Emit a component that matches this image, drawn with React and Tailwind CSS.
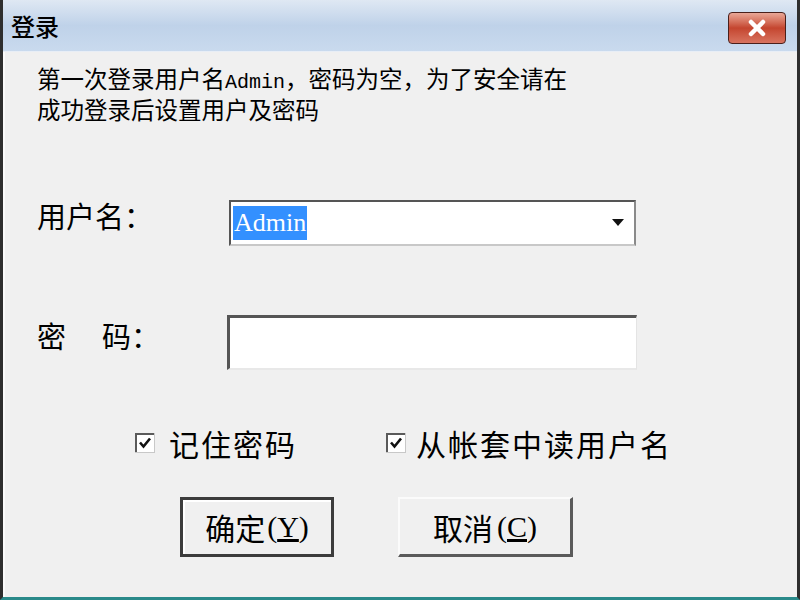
import React from 'react';

const CJK = { fontFamily: '"Noto Sans CJK SC", "Liberation Sans", sans-serif' };

// 复选框（已勾选）
const CheckBox = () => (
  <svg width="20" height="20" viewBox="0 0 20 20" className="shrink-0">
    <rect x="0.5" y="0.5" width="19" height="19" fill="#fff" stroke="#c8c8c8" />
    <path d="M1 19V1h18" fill="none" stroke="#5a5a5a" strokeWidth="2" />
    <path d="M5 9.5l3.5 4 6.5-8" fill="none" stroke="#111" strokeWidth="2.6" />
  </svg>
);

const App = () => {
  return (
    <div
      className="w-[800px] h-[600px] flex flex-col overflow-hidden border-l-[3px] border-r-[3px] border-b-[3px] border-l-[#2e2e2e] border-r-[#2e2e2e] border-b-[#2a8a8a] bg-[#f0f0f0]"
      style={CJK}
    >
      {/* 标题栏 */}
      <div className="h-[52px] shrink-0 flex items-start bg-gradient-to-b from-[#dfe8f3] via-[#bfd2e9] to-[#c9daee] border-b border-[#e8eef6]">
        <span className="ml-[8px] mt-[12px] text-[24px] leading-[28px] font-medium text-black">登录</span>
        <div className="ml-auto mr-[11px] mt-[12px] w-[58px] h-[32px] rounded-[4px] border border-[#4a1f1a] bg-gradient-to-b from-[#e9a797] via-[#c4452f] to-[#d8735f] flex items-center justify-center">
          <svg width="22" height="18" viewBox="0 0 22 18">
            <path d="M5 3l12 12M17 3L5 15" stroke="#fff" strokeWidth="4.5" strokeLinecap="round" />
          </svg>
        </div>
      </div>

      {/* 内容区 */}
      <div className="flex-1 flex flex-col pl-[32px] pt-[13px] border-l-2 border-[#fafafa]">
        <div className="text-[23.5px] leading-[26px] text-black">
          <div>
            第一次登录用户名<span className="font-['Liberation_Mono'] text-[20px]">Admin</span>，密码为空，为了安全请在
          </div>
          <div>成功登录后设置用户及密码</div>
        </div>

        {/* 用户名 */}
        <div className="flex items-center mt-[78px]">
          <div className="w-[192px] text-[29px] leading-[34px] text-black -mt-[16px]">用户名：</div>
          <div className="w-[407px] h-[46px] bg-white border-t-2 border-l-2 border-[#555] border-r-2 border-r-[#8a8a8a] border-b-2 border-b-[#c8c8c8] flex items-center">
            <span className="ml-[2px] px-[1px] bg-[#3390ff] text-white text-[26px] leading-[34px] font-['Liberation_Serif']">Admin</span>
            <div className="ml-auto mr-[2px] w-[28px] h-[38px] flex items-center justify-center">
              <svg width="12" height="8" viewBox="0 0 12 8"><path d="M0 0h12L6 7z" fill="#111" /></svg>
            </div>
          </div>
        </div>

        {/* 密码 */}
        <div className="flex items-center mt-[69px]">
          <div className="w-[192px] text-[29px] leading-[34px] text-black -mt-[16px] flex">
            <span>密</span>
            <span className="ml-[36px]">码：</span>
          </div>
          <div className="w-[410px] h-[55px] -ml-[2px] bg-white border-t-[3px] border-l-[3px] border-[#555] border-r border-r-[#e4e4e4] border-b-2 border-b-[#e8e8e8]" />
        </div>

        {/* 复选框 */}
        <div className="flex items-center mt-[56px] text-[30px] leading-[34px] tracking-[2px] text-black">
          <div className="ml-[98px] flex items-center gap-[14px]">
            <CheckBox />
            <span>记住密码</span>
          </div>
          <div className="ml-[89px] flex items-center gap-[10px]">
            <CheckBox />
            <span>从帐套中读用户名</span>
          </div>
        </div>

        {/* 按钮 */}
        <div className="flex items-start mt-[37px] text-[30px] leading-[34px] text-black">
          <button className="ml-[143px] w-[154px] h-[60px] bg-[#f0f0f0] border-[3px] border-[#3c3c3c] flex items-center justify-center shadow-[inset_2px_2px_0_#fff]">
            确定<span className="font-['Liberation_Serif'] ml-[2px]">(<span className="underline">Y</span>)</span>
          </button>
          <button className="ml-[64px] w-[175px] h-[60px] bg-[#f0f0f0] border-t-2 border-l-2 border-[#fbfbfb] border-r-[3px] border-b-[3px] border-r-[#5a5a5a] border-b-[#5a5a5a] flex items-center justify-center">
            取消<span className="font-['Liberation_Serif'] ml-[4px]">(<span className="underline">C</span>)</span>
          </button>
        </div>
      </div>
    </div>
  );
};

export default App;
